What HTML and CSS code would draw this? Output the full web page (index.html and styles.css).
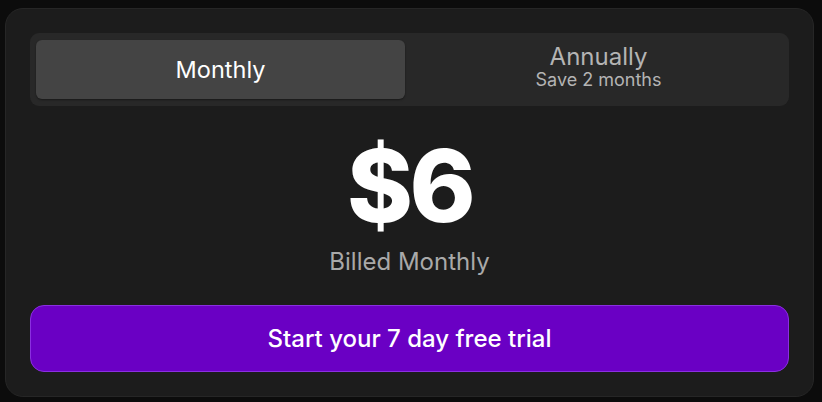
FILE: index.html
```html
<!DOCTYPE html>
<html lang="en">
<head>
    <meta charset="UTF-8">
    <title>Pricing</title>
    <link rel="stylesheet" href="styles.css">
</head>
<body>

    <div class="card">
        <div class="toggle">
            <div class="opt active">Monthly</div>
            <div class="opt">
                <span class="opt-name">Annually</span>
                <span class="opt-note">Save 2 months</span>
            </div>
        </div>

        <div class="price">$6</div>
        <div class="billed">Billed Monthly</div>

        <button class="cta">Start your 7 day free trial</button>
    </div>

</body>
</html>
```

FILE: styles.css
```css
body {
    margin: 0;
    padding: 8px 0 0 5px;
    background-color: #0c0c0c;
    font-family: Inter, "Noto Sans", sans-serif;
}

.card {
    width: 759px;
    padding: 24px;
    border: 1px solid #262626;
    border-radius: 18px;
    background-color: #1c1c1c;
    display: flex;
    flex-direction: column;
    align-items: center;
}

/* monthly / annually switch */
.toggle {
    width: 747px;
    padding: 7px 6px;
    border-radius: 9px;
    background-color: #282828;
    display: grid;
    grid-template-columns: 1fr 1fr;
    gap: 9px;
}

.opt {
    height: 59px;
    border-radius: 6px;
    display: flex;
    flex-direction: column;
    align-items: center;
    justify-content: center;
    color: #b4b4b4;
}

.opt.active {
    background-color: #444444;
    color: #ffffff;
    font-size: 23.5px;
    box-shadow: 0 1px 2px rgba(0, 0, 0, 0.4);
}

.opt-name {
    font-size: 24px;
    line-height: 25px;
    margin-top: -4px;
}

.opt-note {
    font-size: 18px;
    line-height: 22px;
}

.price {
    margin-top: 30px;
    font-size: 100px;
    line-height: 100px;
    font-weight: 800;
    letter-spacing: -3.5px;
    color: #ffffff;
}

.billed {
    margin-top: 12px;
    font-size: 24px;
    line-height: 28px;
    color: #a9a9a9;
}

.cta {
    margin-top: 29px;
    width: 759px;
    height: 67px;
    border: 1px solid #8a2fe0;
    border-radius: 14px;
    background-color: #6a00c4;
    color: #ffffff;
    font-family: inherit;
    font-size: 24px;
    font-weight: 500;
}
```
